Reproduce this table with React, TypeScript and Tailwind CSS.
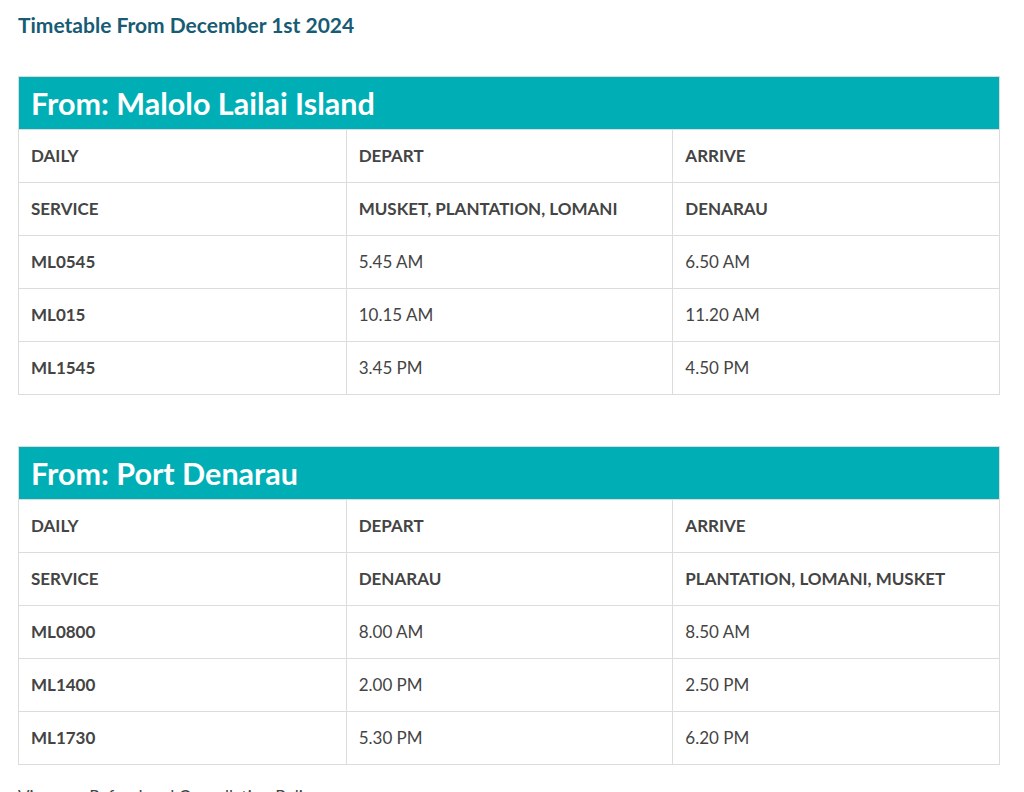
import React from 'react';

type Row = [string, string, string];

const timetables: { from: string; rows: Row[] }[] = [
  {
    from: 'Malolo Lailai Island',
    rows: [
      ['DAILY', 'DEPART', 'ARRIVE'],
      ['SERVICE', 'MUSKET, PLANTATION, LOMANI', 'DENARAU'],
      ['ML0545', '5.45 AM', '6.50 AM'],
      ['ML015', '10.15 AM', '11.20 AM'],
      ['ML1545', '3.45 PM', '4.50 PM'],
    ],
  },
  {
    from: 'Port Denarau',
    rows: [
      ['DAILY', 'DEPART', 'ARRIVE'],
      ['SERVICE', 'DENARAU', 'PLANTATION, LOMANI, MUSKET'],
      ['ML0800', '8.00 AM', '8.50 AM'],
      ['ML1400', '2.00 PM', '2.50 PM'],
      ['ML1730', '5.30 PM', '6.20 PM'],
    ],
  },
];

const Timetable = ({ from, rows }: { from: string; rows: Row[] }) => (
  <div className="w-[982px] border border-[#dcdcdc]">
    <div className="h-[52px] bg-[#00afb6] px-3 flex items-center">
      <h2 className="text-[30.5px] font-bold text-white leading-none">From: {from}</h2>
    </div>
    {rows.map((row, i) => (
      <div key={i} className="grid grid-cols-3 h-[53px] border-t border-[#dcdcdc]">
        {row.map((cell, j) => (
          <div
            key={j}
            className={`flex items-center px-3 text-[17px] text-[#444] ${
              j > 0 ? 'border-l border-[#dcdcdc]' : ''
            } ${i < 2 || j === 0 ? 'font-bold' : ''}`}
          >
            {cell}
          </div>
        ))}
      </div>
    ))}
  </div>
);

export default function App() {
  return (
    <div className="bg-white min-h-[792px] px-[18px] pt-[12px] font-['Lato','Liberation_Sans',sans-serif]">
      <h1 className="text-[21px] font-bold text-[#175b74] leading-[26px]">Timetable From December 1st 2024</h1>
      <div className="mt-[38px] flex flex-col gap-[51px]">
        {timetables.map((t) => (
          <Timetable key={t.from} {...t} />
        ))}
      </div>
      <p className="mt-[20px] text-[17px] text-[#444] leading-[24px]">View our Refund and Cancellation Policy</p>
    </div>
  );
}
